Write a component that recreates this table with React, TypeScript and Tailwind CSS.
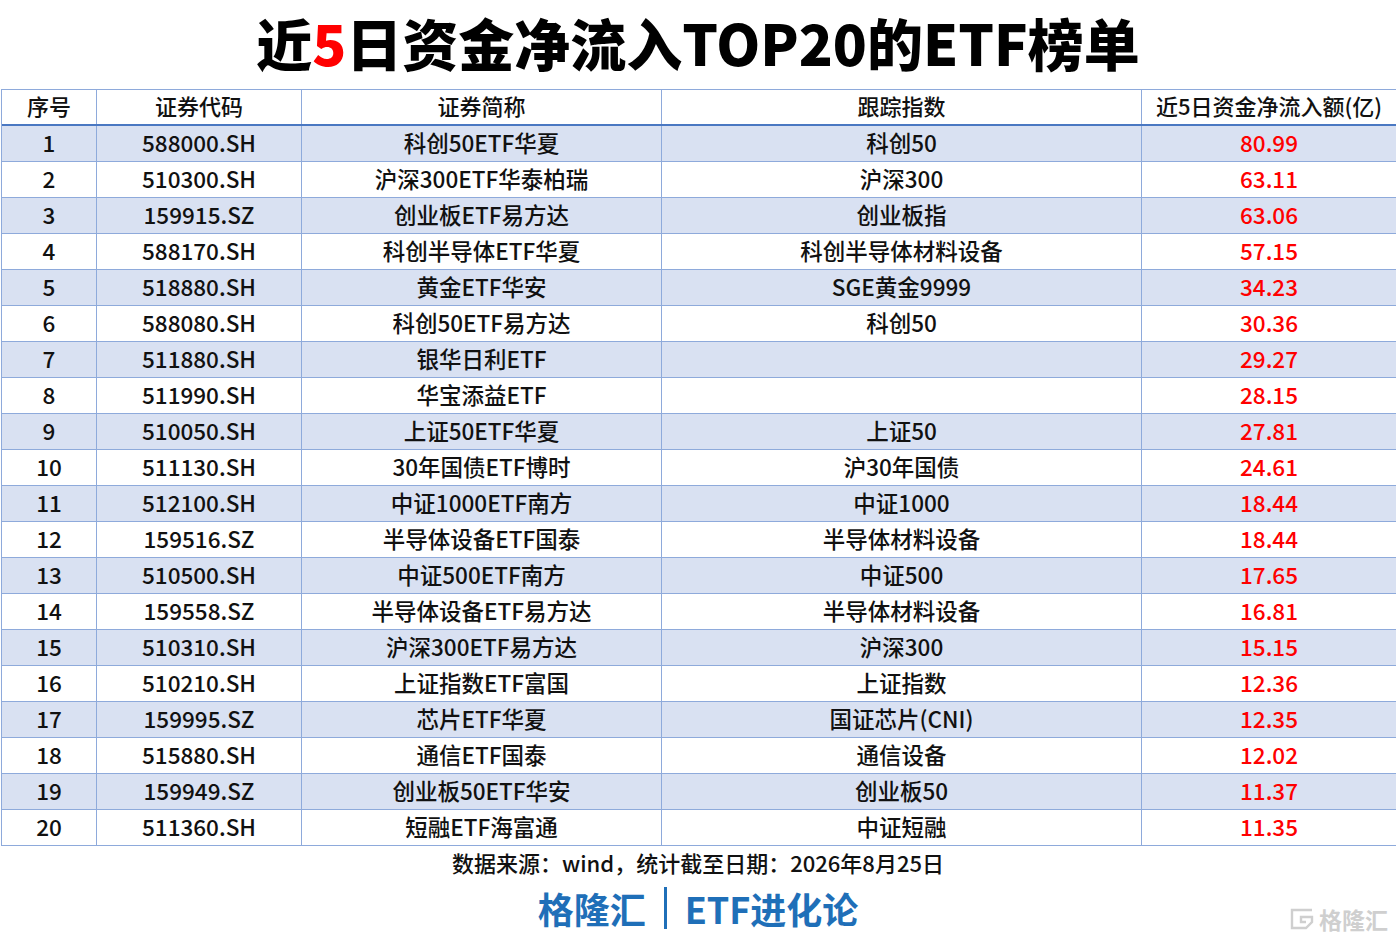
import React from "react";

type Row = [string, string, string, string, string];

const ROWS: Row[] = [
  ["1", "588000.SH", "科创50ETF华夏", "科创50", "80.99"],
  ["2", "510300.SH", "沪深300ETF华泰柏瑞", "沪深300", "63.11"],
  ["3", "159915.SZ", "创业板ETF易方达", "创业板指", "63.06"],
  ["4", "588170.SH", "科创半导体ETF华夏", "科创半导体材料设备", "57.15"],
  ["5", "518880.SH", "黄金ETF华安", "SGE黄金9999", "34.23"],
  ["6", "588080.SH", "科创50ETF易方达", "科创50", "30.36"],
  ["7", "511880.SH", "银华日利ETF", "", "29.27"],
  ["8", "511990.SH", "华宝添益ETF", "", "28.15"],
  ["9", "510050.SH", "上证50ETF华夏", "上证50", "27.81"],
  ["10", "511130.SH", "30年国债ETF博时", "沪30年国债", "24.61"],
  ["11", "512100.SH", "中证1000ETF南方", "中证1000", "18.44"],
  ["12", "159516.SZ", "半导体设备ETF国泰", "半导体材料设备", "18.44"],
  ["13", "510500.SH", "中证500ETF南方", "中证500", "17.65"],
  ["14", "159558.SZ", "半导体设备ETF易方达", "半导体材料设备", "16.81"],
  ["15", "510310.SH", "沪深300ETF易方达", "沪深300", "15.15"],
  ["16", "510210.SH", "上证指数ETF富国", "上证指数", "12.36"],
  ["17", "159995.SZ", "芯片ETF华夏", "国证芯片(CNI)", "12.35"],
  ["18", "515880.SH", "通信ETF国泰", "通信设备", "12.02"],
  ["19", "159949.SZ", "创业板50ETF华安", "创业板50", "11.37"],
  ["20", "511360.SH", "短融ETF海富通", "中证短融", "11.35"],
];

const FONT = "font-['Noto_Sans_CJK_SC','Noto_Sans',sans-serif]";
const COLS = "grid grid-cols-[95px_205px_360px_480px_255px]";

const App: React.FC = () => {
  return (
    <div className={`w-[1396px] h-[941px] bg-white relative overflow-hidden ${FONT}`}>
      {/* 标题 */}
      <h1 className="h-[89px] pb-[6px] flex items-center justify-center text-[56px] font-black text-black leading-none">
        近<span className="text-[#ff0000]">5</span>日资金净流入TOP20的ETF榜单
      </h1>

      {/* 表格 */}
      <div className="ml-px border-l border-[#8eaadb] w-[1395px]">
        <div className={`${COLS} h-[37px] border-t border-b-2 border-t-[#8eaadb] border-b-[#4a78c2]`}>
          {["序号", "证券代码", "证券简称", "跟踪指数", "近5日资金净流入额(亿)"].map((h, i) => (
            <div
              key={i}
              className="flex items-center justify-center pb-[4px] border-r border-[#8eaadb] text-[22px] font-medium text-[#111] leading-none"
            >
              {h}
            </div>
          ))}
        </div>
        {ROWS.map((r, idx) => (
          <div
            key={idx}
            className={`${COLS} h-[36px] border-b border-[#8eaadb] ${idx % 2 === 0 ? "bg-[#d9e1f2]" : "bg-white"}`}
          >
            {r.map((c, i) => (
              <div
                key={i}
                className={[
                  "flex items-center justify-center pb-[3px] border-r border-[#8eaadb] text-[22.5px] font-medium leading-none",
                  i === 4 ? "text-[#ff0000]" : "text-[#111]",
                ].join(" ")}
              >
                {c}
              </div>
            ))}
          </div>
        ))}
      </div>

      {/* 来源 */}
      <div className="mt-[5px] flex justify-center text-[22px] font-medium text-[#111] leading-none">
        数据来源：wind，统计截至日期：2026年8月25日
      </div>

      {/* 品牌 */}
      <div className="mt-[14px] flex justify-center items-center text-[#1f6fb8] text-[36px] font-bold leading-none">
        <span>格隆汇</span>
        <span className="mx-[18px] inline-block w-[3px] h-[42px] bg-[#1f6fb8]" />
        <span>ETF进化论</span>
      </div>

      {/* 水印 */}
      <div className="absolute right-[8px] bottom-[10px] flex items-center gap-[4px] text-[#cfcfcf]">
        <svg width="26" height="24" viewBox="0 0 26 24" fill="none" stroke="#cfcfcf" strokeWidth="2.4">
          <path d="M23 3H3v18h14l6-6V10H12v5h5" />
        </svg>
        <span className="text-[23px] font-bold leading-none">格隆汇</span>
      </div>
    </div>
  );
};

export default App;
